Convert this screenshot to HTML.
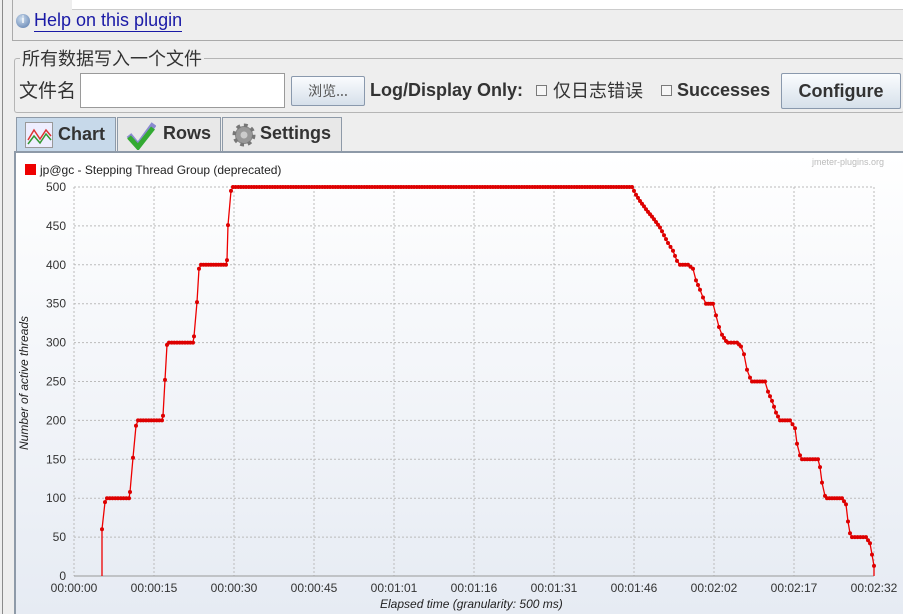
<!DOCTYPE html>
<html><head><meta charset="utf-8">
<style>
body{margin:0;width:903px;height:614px;overflow:hidden;background:#eeeeee;font-family:"Liberation Sans","Noto Sans CJK SC",sans-serif;position:relative}
.a{position:absolute}
.cn{font-family:"Noto Sans CJK SC","WenQuanYi Zen Hei",sans-serif}
.btn{border:1px solid #8a99ad;border-radius:2px;background:linear-gradient(#fafcfe,#d6e0ea);box-sizing:border-box}
.tab{border:1px solid #8e9aa8;border-bottom:none;box-sizing:border-box;background:#e8e8e8;font-weight:bold;font-size:18px;color:#333}
.cb{width:11px;height:11px;border:1px solid #7a7a7a;background:#f6f6f6;box-sizing:border-box}
</style></head><body>
<div class="a" style="left:2px;top:0;width:1px;height:614px;background:#8a8a8a"></div>
<div class="a" style="left:12px;top:0;width:891px;height:40px;border-left:1px solid #aaa;border-bottom:1px solid #aaa"></div>
<div class="a" style="left:72px;top:0;width:831px;height:9px;background:#fff;border-bottom:1px solid #ccc"></div>
<div class="a" style="left:16px;top:14px;width:14px;height:14px;border-radius:50%;background:radial-gradient(circle at 40% 35%,#cde,#57a);color:#fff;font-size:10px;text-align:center;line-height:14px;font-weight:bold">i</div>
<div class="a" style="left:34px;top:9px;font-size:18px;color:#1a1aa6;border-bottom:1px solid #1a1aa6;line-height:22px">Help on this plugin</div>
<div class="a" style="left:14px;top:58px;width:889px;height:53px;border:1px solid #b5b5b5;border-right:none;border-radius:3px"></div>
<div class="a cn" style="left:20px;top:46px;font-size:18px;color:#333;background:#eeeeee;padding:0 2px;line-height:24px">所有数据写入一个文件</div>
<div class="a cn" style="left:19px;top:78px;font-size:19px;color:#333;line-height:24px">文件名</div>
<div class="a" style="left:80px;top:73px;width:205px;height:35px;background:#fff;border:1px solid #9a9a9a;box-sizing:border-box"></div>
<div class="a btn cn" style="left:291px;top:76px;width:74px;height:30px;font-size:14px;color:#555;text-align:center;line-height:28px">浏览...</div>
<div class="a" style="left:370px;top:80px;font-size:18px;font-weight:bold;color:#333">Log/Display Only:</div>
<div class="a cb" style="left:536px;top:85px"></div>
<div class="a cn" style="left:553px;top:78px;font-size:18px;color:#333;line-height:24px">仅日志错误</div>
<div class="a cb" style="left:661px;top:85px"></div>
<div class="a" style="left:677px;top:80px;font-size:18px;font-weight:bold;color:#333">Successes</div>
<div class="a btn" style="left:781px;top:73px;width:120px;height:36px;font-size:18px;font-weight:bold;color:#333;text-align:center;line-height:34px">Configure</div>
<div class="a tab" style="left:16px;top:117px;width:100px;height:36px;background:#c7d9ea">
<svg class="a" style="left:8px;top:4px" width="28" height="26"><rect x="0.5" y="0.5" width="27" height="25" fill="#eef" stroke="#999"/><polyline points="3,18 9,8 15,17 21,8 26,14" fill="none" stroke="#d33" stroke-width="1.5"/><polyline points="3,22 9,14 15,21 21,12 26,18" fill="none" stroke="#393" stroke-width="1.5"/></svg>
<span class="a" style="left:41px;top:6px">Chart</span></div>
<div class="a tab" style="left:117px;top:117px;width:104px;height:34px">
<svg class="a" style="left:8px;top:2px" width="30" height="30"><path d="M3 15 L12 26 L28 4" fill="none" stroke="#8a8ad0" stroke-width="6"/><path d="M3 17 L12 27 L27 8" fill="none" stroke="#3a3" stroke-width="5"/></svg>
<span class="a" style="left:45px;top:5px">Rows</span></div>
<div class="a tab" style="left:222px;top:117px;width:120px;height:34px">
<svg class="a" style="left:8px;top:4px" width="26" height="26"><circle cx="13" cy="13" r="9" fill="#888" stroke="#777" stroke-width="5" stroke-dasharray="3.5 3.5"/><circle cx="13" cy="13" r="8" fill="#999"/><circle cx="13" cy="13" r="3.5" fill="#ccc"/></svg>
<span class="a" style="left:37px;top:5px">Settings</span></div>
<div class="a" style="left:14px;top:151px;width:889px;height:463px;border-top:2px solid #8e9aa8;border-left:2px solid #8e9aa8;box-sizing:border-box;background:linear-gradient(#ffffff,#e6ebf3)"></div>
<div class="a" style="left:812px;top:157px;font-size:9px;color:#bbb">jmeter-plugins.org</div>
<div class="a" style="left:25px;top:164px;width:11px;height:11px;background:#e00"></div>
<div class="a" style="left:40px;top:163px;font-size:12px;color:#222">jp@gc - Stepping Thread Group (deprecated)</div>
<svg class="a" id="ch" style="left:0;top:0" width="903" height="614" font-family="Liberation Sans" font-size="12" fill="#333"></svg>
<div class="a" style="left:380px;top:597px;font-size:12px;font-style:italic;color:#222">Elapsed time (granularity: 500 ms)</div>
<div class="a" style="left:17px;top:450px;font-size:12px;font-style:italic;color:#222;transform:rotate(-90deg);transform-origin:0 0;white-space:nowrap">Number of active threads</div>
<script>
var s=document.getElementById('ch'),h='';
function Y(v){return 576-v*0.778}
for(var i=0;i<=10;i++){var x=74+i*80;h+='<line x1="'+x+'" y1="187" x2="'+x+'" y2="576" stroke="#bbb" stroke-dasharray="2 2"/>';}
for(var v=0;v<=500;v+=50){var y=Y(v);h+='<line x1="74" y1="'+y+'" x2="874" y2="'+y+'" stroke="#bbb" stroke-dasharray="2 2"/><text x="66" y="'+(y+4)+'" text-anchor="end">'+v+'</text>';}
h+='<line x1="74" y1="576" x2="874" y2="576" stroke="#999"/>';
var lb=['00:00:00','00:00:15','00:00:30','00:00:45','00:01:01','00:01:16','00:01:31','00:01:46','00:02:02','00:02:17','00:02:32'];
for(i=0;i<11;i++)h+='<text x="'+(74+i*80)+'" y="592" text-anchor="middle">'+lb[i]+'</text>';
var k=[[102,60],[105,95],[107,100],[129,100],[130,108],[133,152],[136,193],[138,200],[162,200],[163,206],[165,252],[167,297],[169,300],[193,300],[194,308],[197,352],[199,395],[201,400],[226,400],[227,406],[228,451],[231,495],[233,500],[632,500],[636,490],[640,482],[644,475],[648,468],[652,462],[656,455],[660,448],[664,438],[668,428],[673,418],[677,405],[680,400],[688,400],[693,395],[696,380],[700,368],[703,358],[706,350],[713,350],[716,335],[719,320],[722,310],[726,302],[728,300],[737,300],[741,295],[744,285],[747,265],[750,255],[752,250],[765,250],[768,237],[772,225],[776,210],[780,200],[790,200],[795,190],[797,170],[800,155],[802,150],[818,150],[820,140],[822,120],[825,103],[827,100],[842,100],[846,92],[848,70],[850,55],[852,50],[866,50],[870,42],[874,13]];
var pts='102,576 ',dots=[];
for(i=0;i<k.length;i++){pts+=k[i][0]+','+Y(k[i][1]).toFixed(1)+' ';}
for(i=0;i<k.length-1;i++){var a=k[i],b=k[i+1],n=Math.max(1,Math.round((b[0]-a[0])/2.63));for(var j=0;j<n;j++){var t=j/n;dots.push([a[0]+(b[0]-a[0])*t,a[1]+(b[1]-a[1])*t]);}}
dots.push(k[k.length-1]);
pts+='874,576';
h+='<polyline points="'+pts+'" fill="none" stroke="#e00" stroke-width="1.3"/>';
for(i=0;i<dots.length;i++)h+='<circle cx="'+dots[i][0].toFixed(1)+'" cy="'+Y(dots[i][1]).toFixed(1)+'" r="2" fill="#d00"/>';
s.innerHTML=h;
</script>
</body></html>
